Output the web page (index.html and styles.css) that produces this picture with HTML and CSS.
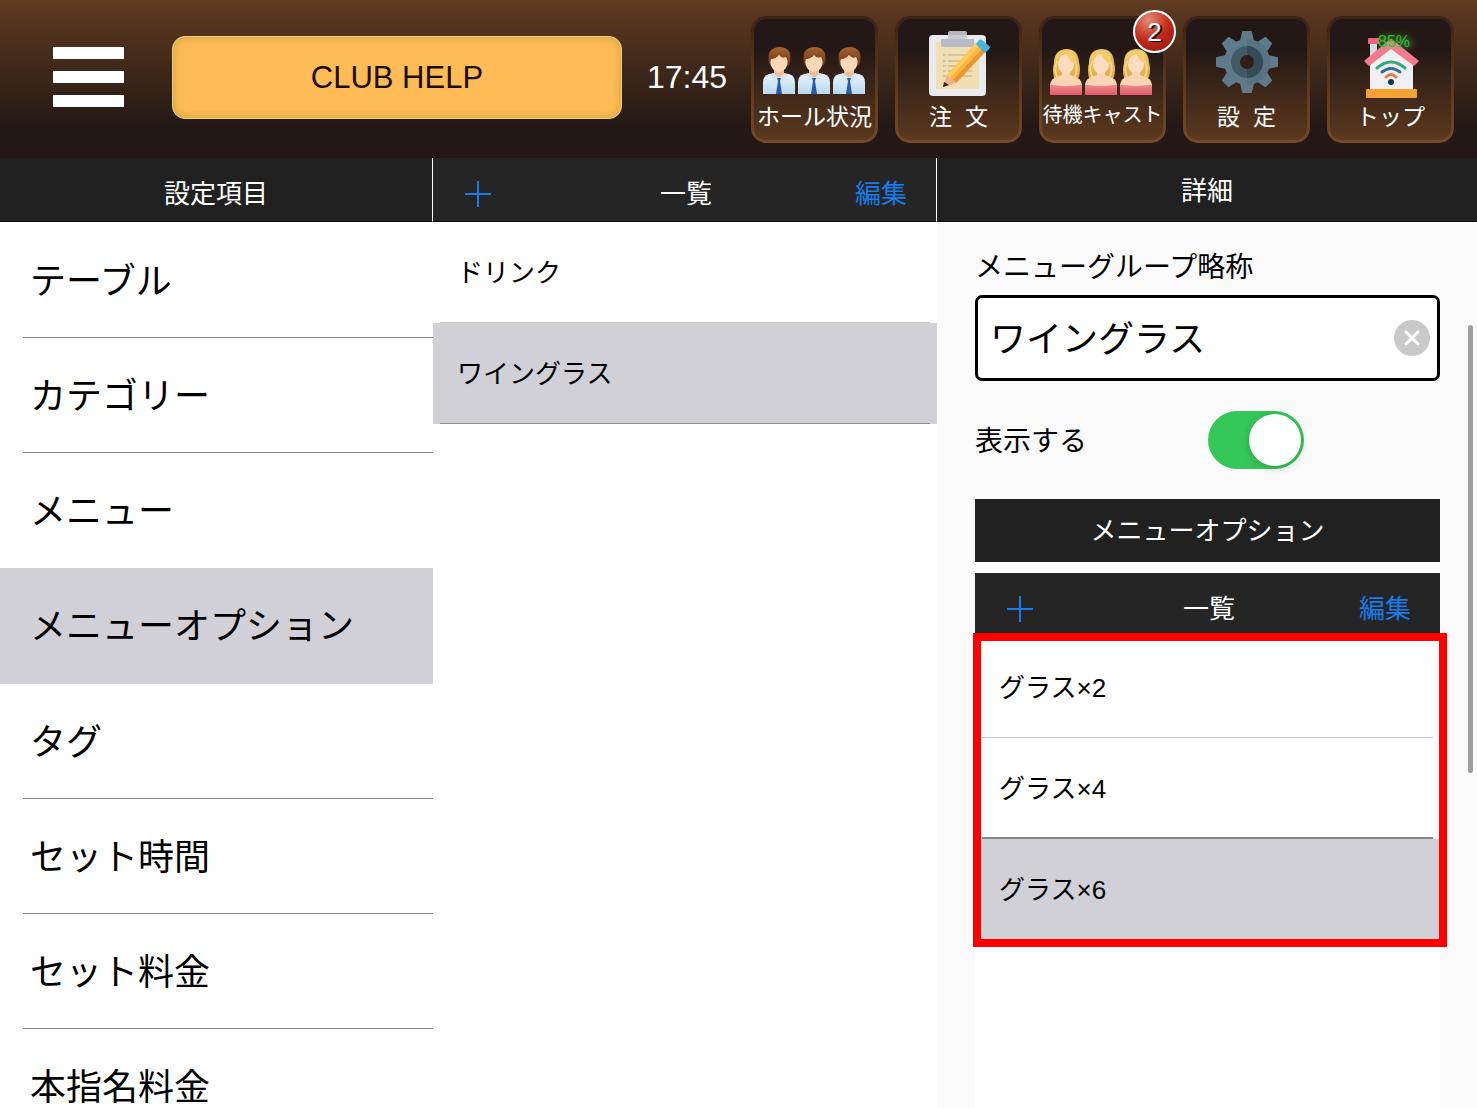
FILE: index.html
```html
<!DOCTYPE html>
<html lang="ja">
<head>
<meta charset="utf-8">
<meta name="viewport" content="width=device-width, initial-scale=1">
<title>CLUB HELP</title>
<link rel="stylesheet" href="styles.css">
</head>
<body>
<svg class="defs" aria-hidden="true">
  <defs>
    <linearGradient id="hairBrown" x1="0" y1="0" x2="0" y2="1"><stop offset="0" stop-color="#a8632f"/><stop offset="1" stop-color="#6b3216"/></linearGradient>
    <linearGradient id="shirtBlue" x1="0" y1="0" x2="0" y2="1"><stop offset="0" stop-color="#eaf5fd"/><stop offset="1" stop-color="#b9d9ef"/></linearGradient>
    <linearGradient id="hairBlond" x1="0" y1="0" x2="0" y2="1"><stop offset="0" stop-color="#efc75e"/><stop offset="1" stop-color="#e0ac48"/></linearGradient>
    <linearGradient id="dressRed" x1="0" y1="0" x2="0" y2="1"><stop offset="0" stop-color="#f08a8c"/><stop offset="1" stop-color="#e0586a"/></linearGradient>
    <symbol id="man" viewBox="0 0 34 47">
      <path d="M1 47V35q0-6 6-8l6-1h8l6 1q6 2 6 8v12z" fill="url(#shirtBlue)"/>
      <path d="M12 23h10v5l-5 4-5-4z" fill="#f1bd94"/>
      <path d="M11 26l6 5-4 4-4-7zM23 26l-6 5 4 4 4-7z" fill="#d3e6f5"/>
      <path d="M15 31h4l-1 3 2 13h-6l2-13z" fill="#2c5aa6"/>
      <ellipse cx="17" cy="14" rx="9" ry="11" fill="#fcd7b4"/>
      <path d="M7 16Q4 1 17 0q14 0 11 16l-2 3q0-6-2-9-4 2-7-2-3 4-8 4-1 2-1 7z" fill="url(#hairBrown)"/>
    </symbol>
    <symbol id="woman" viewBox="0 0 34 46">
      <path d="M5 29Q3 20 5 14 5 1 17 0q12 0 13 13 2 7 0 15-2 4-8 2H11q-4 2-6-1z" fill="url(#hairBlond)"/>
      <path d="M1 36q1-7 7-8l5-2v-5h8v5l5 2q6 1 7 8v2H1z" fill="#fbd3b5"/>
      <path d="M1 36h3q13 2 26 0h3v10H1z" fill="url(#dressRed)"/>
      <ellipse cx="17" cy="15" rx="8" ry="10" fill="#fddcc2"/>
      <path d="M8 15Q8 5 17 4q2 7 9 11 2-9-4-13Q8 0 7 9z" fill="#f1cd6c"/>
      <path d="M8 12q-4 10 1 17M26 12q4 10-1 17" fill="none" stroke="#f5d88a" stroke-width="2"/>
    </symbol>
  </defs>
</svg>

<header class="topbar">
  <button class="burger" type="button" aria-label="メニュー"><span></span><span></span><span></span></button>
  <button class="club" type="button">CLUB HELP</button>
  <time class="clock">17:45</time>
  <nav class="tiles">
    <button class="tile" type="button">
      <svg viewBox="0 0 110 70"><use href="#man" x="2" y="19" width="34" height="47"/><use href="#man" x="37" y="19" width="34" height="47"/><use href="#man" x="72" y="19" width="34" height="47"/></svg>
      <span>ホール状況</span>
    </button>
    <button class="tile" type="button">
      <svg viewBox="0 0 110 70">
        <rect x="25" y="7" width="57" height="61" rx="4" fill="#e9e9ee"/>
        <rect x="32" y="14" width="43" height="47" rx="1" fill="#efdfb3"/>
        <path d="M39 27h3M39 33h3M39 38h3M39 43h3M39 48h3M44 27h24M44 33h24M44 38h24M44 43h24M44 48h24" stroke="#cbbd95" stroke-width="1.5"/>
        <path d="M44 5q0-2 2-2h15q2 0 2 2v6H44z" fill="#b5b7bd"/>
        <path d="M37 11h33v5q0 3-3 3H40q-3 0-3-3z" fill="#b9bcc4"/>
        <path d="M44 7h19v4H44z" fill="#c9cbd1"/>
        <path d="M39 59l4-12 9 8z" fill="#e9b48c"/>
        <path d="M39 59l1-5 5 3z" fill="#2b2320"/>
        <path d="M43 47L72 15l10 8-30 32z" fill="#fbb840"/>
        <path d="M49 52L79 20l3 3-30 32z" fill="#ec9530"/>
        <path d="M43 47L72 15l3 3-29 32z" fill="#ffcb58"/>
        <path d="M72 16l3-4q2-1 3 0l7 6q2 1 0 3l-4 4z" fill="#45b4e0"/>
      </svg>
      <span>注  文</span>
    </button>
    <button class="tile" type="button">
      <svg viewBox="0 0 110 70"><use href="#woman" x="1" y="21" width="34" height="46"/><use href="#woman" x="36" y="21" width="34" height="46"/><use href="#woman" x="71" y="21" width="34" height="46"/></svg>
      <span class="small">待機キャスト</span>
      <b class="badge">2</b>
    </button>
    <button class="tile" type="button">
      <svg viewBox="0 0 110 70">
        <g transform="translate(55 34)">
          <g fill="#5f7b8b">
            <circle r="23"/>
            <g id="teeth"><path d="M-7-21l2-9Q-5-31-4-31H4Q5-31 5-30l2 9zM-7 21l2 9q0 1 1 1h8q1 0 1-1l2-9z"/></g>
            <use href="#teeth" transform="rotate(45)"/><use href="#teeth" transform="rotate(90)"/><use href="#teeth" transform="rotate(135)"/>
          </g>
          <path d="M0-23a23 23 0 0 1 0 46z" fill="#4c6676" opacity=".4"/>
          <circle r="16" fill="#435a66"/><path d="M0-16a16 16 0 0 1 0 32z" fill="#364b56"/>
          <circle r="7" fill="#2f1f18"/>
        </g>
      </svg>
      <span>設  定</span>
    </button>
    <button class="tile" type="button">
      <svg viewBox="0 0 110 70">
        <path d="M34 15h7v20h-7z" fill="#d6d8e2"/><rect x="32" y="10" width="11" height="6" rx="1" fill="#f0647f"/>
        <path d="M34 34L55 17l22 17v28H34z" fill="#f0f0f3"/>
        <path d="M28 33L53 12q2-2 4 0l26 21-5 5-23-17-22 17z" fill="#f47a90"/>
        <path d="M41 40q14-12 28 0" fill="none" stroke="#35a77a" stroke-width="3" stroke-linecap="round"/>
        <path d="M46 44q9-7 18 0" fill="none" stroke="#2f6f98" stroke-width="3" stroke-linecap="round"/>
        <path d="M50 49q5-5 10 0" fill="none" stroke="#e07b3c" stroke-width="3" stroke-linecap="round"/>
        <circle cx="55" cy="54" r="3" fill="#12344f"/>
        <rect x="30" y="61" width="51" height="9" rx="1" fill="#f6a233"/>
      </svg>
      <span>トップ</span>
      <small class="battery">85%</small>
    </button>
  </nav>
</header>

<main class="columns">
  <section class="column">
    <header class="bar"><h2>設定項目</h2></header>
    <ul class="settings">
      <li><a href="#table">テーブル</a></li>
      <li><a href="#category">カテゴリー</a></li>
      <li class="before"><a href="#menu">メニュー</a></li>
      <li class="selected"><a href="#option">メニューオプション</a></li>
      <li><a href="#tag">タグ</a></li>
      <li><a href="#time">セット時間</a></li>
      <li><a href="#fee">セット料金</a></li>
      <li><a href="#nomination">本指名料金</a></li>
    </ul>
  </section>

  <section class="column">
    <header class="bar tools">
      <button class="add" type="button" aria-label="追加"><svg viewBox="0 0 26 26"><path d="M13 0v26M0 13h26"/></svg></button>
      <h2>一覧</h2>
      <button class="edit" type="button">編集</button>
    </header>
    <ul class="list">
      <li><a href="#drink">ドリンク</a></li>
      <li class="selected"><a href="#wineglass">ワイングラス</a></li>
    </ul>
  </section>

  <section class="column detail">
    <header class="bar"><h2>詳細</h2></header>
    <form class="form">
      <label class="caption" for="short-name">メニューグループ略称</label>
      <div class="field">
        <input id="short-name" type="text" value="ワイングラス">
        <button class="clear" type="button" aria-label="消去"><svg viewBox="0 0 36 36"><circle cx="18" cy="18" r="18"/><path d="M12 12l12 12M24 12L12 24"/></svg></button>
      </div>
      <div class="visible">
        <label for="visible">表示する</label>
        <input id="visible" class="switch" type="checkbox" role="switch" checked>
      </div>
      <div class="options">
        <h3 class="bar title">メニューオプション</h3>
        <header class="bar tools">
          <button class="add" type="button" aria-label="追加"><svg viewBox="0 0 26 26"><path d="M13 0v26M0 13h26"/></svg></button>
          <h2>一覧</h2>
          <button class="edit" type="button">編集</button>
        </header>
        <ul class="list marked">
          <li><a href="#x2">グラス×2</a></li>
          <li class="strong"><a href="#x4">グラス×4</a></li>
          <li class="selected"><a href="#x6">グラス×6</a></li>
        </ul>
      </div>
    </form>
    <div class="thumb"></div>
  </section>
</main>
</body>
</html>
```

FILE: styles.css
```css
* { box-sizing: border-box; }

body {
  margin: 0;
  height: 100vh;
  display: flex;
  flex-direction: column;
  overflow: hidden;
  background: #fff;
  color: #000;
  font: 26px/36px "Liberation Sans", "Noto Sans CJK JP", sans-serif;
}

h2, h3, ul { margin: 0; padding: 0; font-size: 26px; font-weight: 400; }
ul { list-style: none; }
a { color: inherit; text-decoration: none; }
button { margin: 0; padding: 0; border: 0; background: none; color: inherit; font: inherit; }
svg { display: block; }
.defs { position: absolute; width: 0; height: 0; }

/* top bar */
.topbar {
  flex: none;
  display: flex;
  align-items: center;
  height: 158px;
  padding: 0 23px 4px 53px;
  color: #fff;
  background: linear-gradient(#603b20, #231815 80%);
}
.burger { display: flex; flex-direction: column; gap: 12px; width: 71px; }
.burger span { height: 12px; background: #fff; }
.club {
  flex: 1;
  height: 83px;
  margin: 0 25px 0 48px;
  padding-top: 2px;
  border: 1px solid #e8cf86;
  border-radius: 13px;
  background: #ffbb55;
  box-shadow: inset 0 0 8px 1px #d3a544;
  color: #1a0d04;
  font-size: 31px;
}
.clock { margin-right: 24px; font-size: 32px; }
.tiles { display: flex; gap: 17px; }
.tile {
  position: relative;
  display: flex;
  flex-direction: column;
  align-items: center;
  width: 127px;
  height: 127px;
  margin-top: 4px;
  padding-top: 9px;
  border: 3px solid transparent;
  border-radius: 15px;
  background:
    linear-gradient(#231815 25%, #5c391e) padding-box,
    linear-gradient(#3a2417, #754a25) border-box;
  font-size: 23px;
  line-height: 38px;
  white-space: pre;
}
.tile svg { flex: none; width: 110px; height: 70px; }
.tile .small { font-size: 20px; line-height: 34px; }
.badge {
  position: absolute;
  top: -9px;
  right: -13px;
  width: 43px;
  height: 43px;
  border: 2px solid #fff;
  border-radius: 50%;
  background: radial-gradient(circle at 35% 20%, #e58a78, #c3291a 50%, #8e1508);
  font-size: 26px;
  font-weight: 400;
  line-height: 40px;
  text-shadow: 2px 1px 1px #000;
}
.battery {
  position: absolute;
  top: 14px;
  left: 48px;
  color: #1fc81f;
  font-size: 16px;
  line-height: 18px;
  text-shadow: 2px 1px 6px #6cc86c;
}

/* columns */
.columns { flex: 1; min-height: 0; display: grid; grid-template-columns: 433fr 504fr 540fr; }
.column { position: relative; min-width: 0; overflow: hidden; }
.bar {
  display: flex;
  align-items: center;
  justify-content: center;
  height: 64px;
  padding-top: 8px;
  background: #212121;
  color: #fff;
}
.column > .bar { border-right: 1px solid #fff; border-bottom: 1px solid #111; }
.detail > .bar { border-right: 0; padding-top: 2px; }
.tools { display: grid; grid-template-columns: 1fr auto 1fr; padding-right: 29px; padding-left: 32px; background: #252525; }
.tools .add, .tools .edit { color: #177be8; font-size: 26px; }
.add svg { width: 26px; height: 26px; fill: none; stroke: currentColor; stroke-width: 2; }
.add { justify-self: start; }
.edit { justify-self: end; }

.settings { font-size: 36px; padding-top: 1px; }
.settings li { height: 115px; padding-left: 23px; }
.settings .selected { height: 116px; }
.settings a { display: flex; align-items: center; height: 100%; padding: 3px 0 0 7px; border-bottom: 1px solid #8a8a8a; }
.settings .before a, .settings .selected a { border-color: transparent; }
.selected { background: #d1d0d7; }

.list li { height: 101px; padding: 0 7px; }
.list a { display: flex; align-items: center; height: 100%; padding: 2px 0 0 17px; border-bottom: 1px solid #c8c8c8; }
.list .selected a { border-color: #8f8f93; }
.list .strong a { border-bottom: 2px solid #868686; }

/* detail form */
.detail { background: #fafafa; }
.form { display: flex; flex-direction: column; height: calc(100% - 64px); padding: 28px 37px 0 38px; font-size: 28px; }
.field { position: relative; margin-top: 9px; }
.field input {
  display: block;
  width: 100%;
  height: 86px;
  padding: 0 60px 4px 12px;
  border: 3px solid #000;
  border-radius: 7px;
  outline: 0;
  background: #fff;
  font: inherit;
  font-size: 36px;
}
.clear { position: absolute; top: 25px; right: 10px; }
.clear svg { width: 36px; height: 36px; fill: #c9c9c9; stroke: #fff; stroke-width: 3; stroke-linecap: round; }
.clear circle { stroke: none; }
.visible { display: grid; grid-template-columns: 1fr 1fr; align-items: center; margin: 30px 0; }
.visible label { padding-top: 4px; }
.switch {
  appearance: none;
  width: 96px;
  height: 58px;
  margin: 0;
  padding: 3px;
  border-radius: 29px;
  background: #35c759;
}
.switch::before {
  content: "";
  display: block;
  width: 52px;
  height: 52px;
  margin-left: auto;
  border-radius: 50%;
  background: #fff;
  box-shadow: 0 2px 8px #0003;
}
.options { flex: 1; background: #fff; }
.title { height: 63px; padding-top: 0; margin-bottom: 11px; }
.marked { position: relative; }
.marked::after {
  content: "";
  position: absolute;
  inset: -4px -7px -7px -2px;
  border: 8px solid #f00;
  pointer-events: none;
}
.thumb {
  position: absolute;
  top: 167px;
  right: 4px;
  width: 5px;
  height: 448px;
  border-radius: 3px;
  background: #9e9e9e;
}
```
